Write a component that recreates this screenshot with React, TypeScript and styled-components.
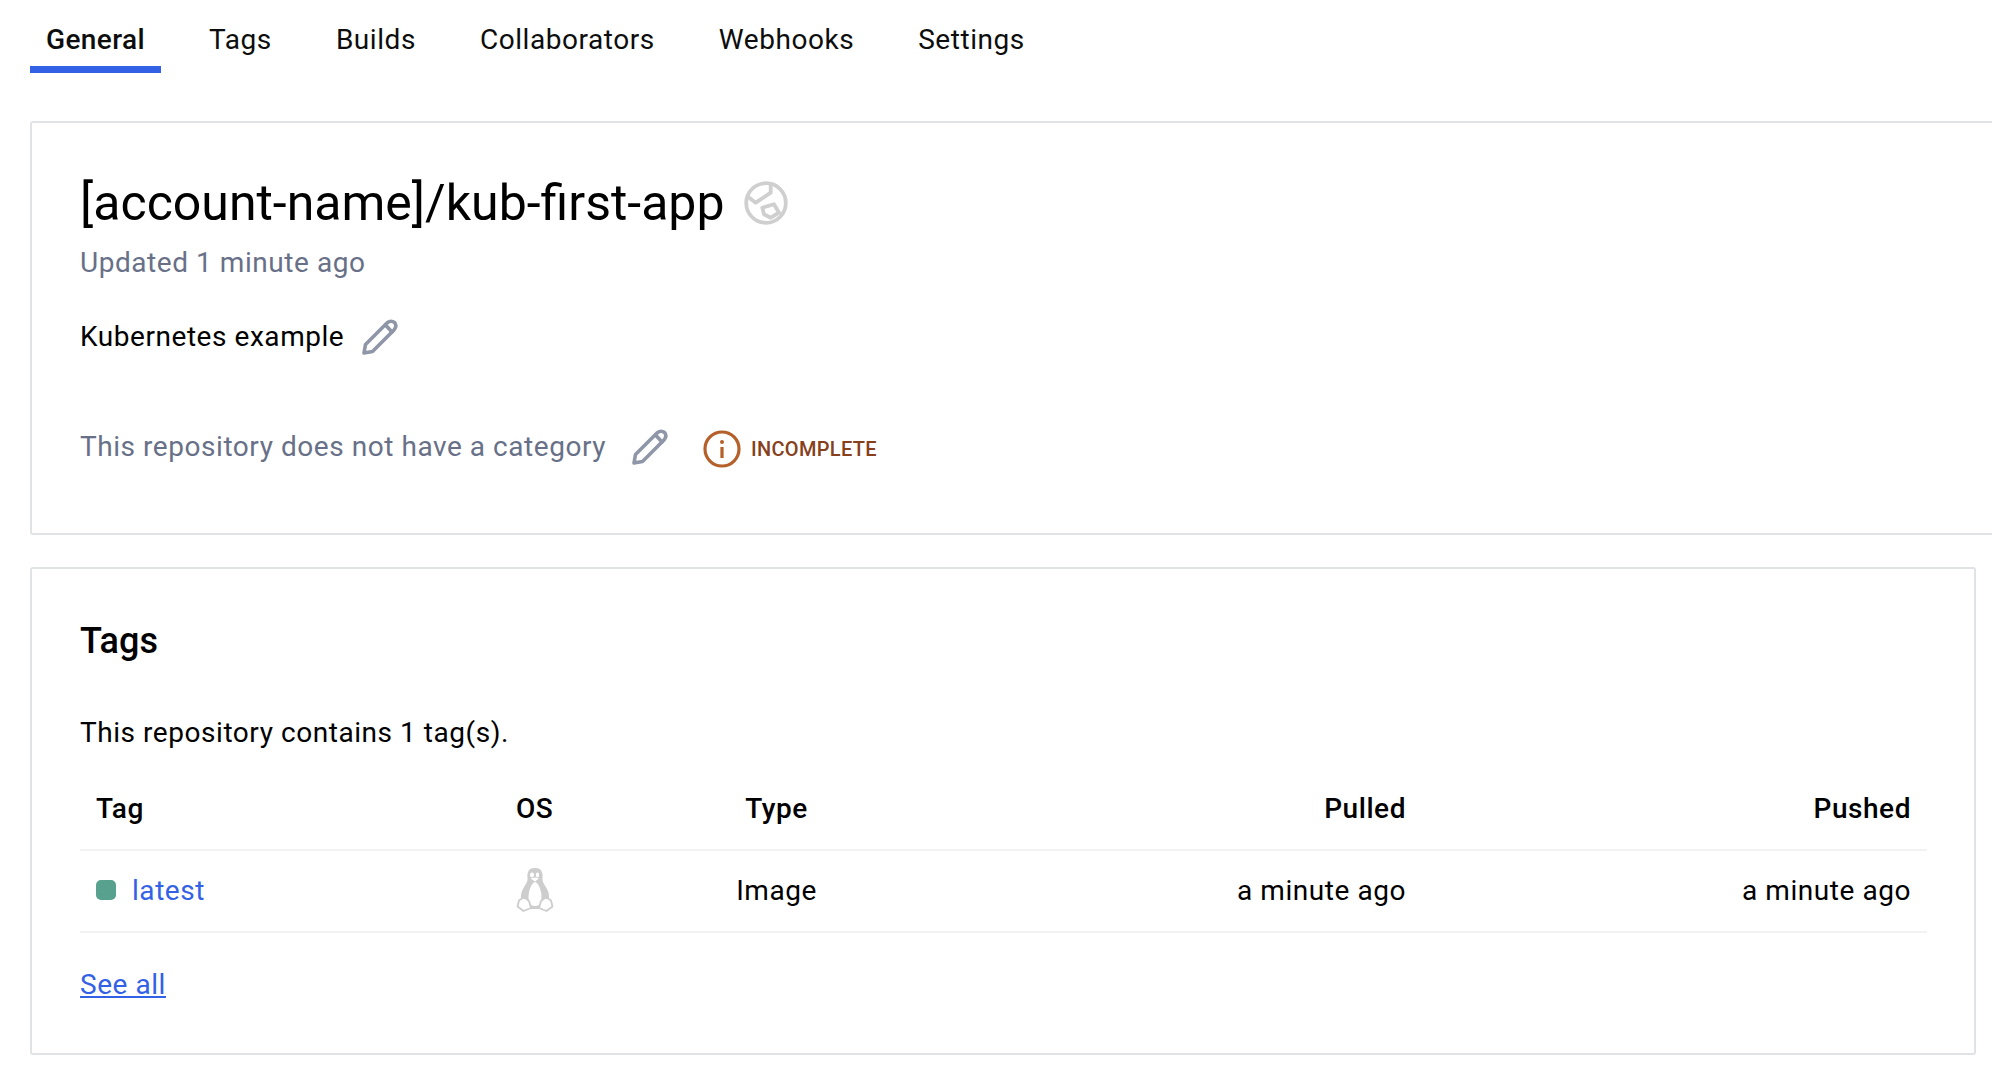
import React from "react";
import styled, { createGlobalStyle } from "styled-components";

const Global = createGlobalStyle`
  html, body { margin: 0; padding: 0; background: #fff; overflow: hidden; }
  body { font-family: Roboto, "Liberation Sans", sans-serif; color: #000; }
  a { color: #3361e6; }
`;

const Page = styled.div`
  width: 1992px;
  height: 1070px;
  overflow: hidden;
  padding: 0 16px 0 30px;
  box-sizing: border-box;
`;

const TabBar = styled.nav`
  display: flex;
  height: 73px;
  margin-bottom: 48px;
`;

const Tab = styled.div<{ $active?: boolean }>`
  padding: 0 16px;
  margin-right: 32px;
  height: 73px;
  line-height: 80px;
  box-sizing: border-box;
  font-size: 28px;
  letter-spacing: ${(p) => (p.$active ? "0.4px" : "0.55px")};
  font-weight: ${(p) => (p.$active ? 500 : 400)};
  color: #0d0d0d;
  border-bottom: 7px solid ${(p) => (p.$active ? "#3361e6" : "transparent")};
  &:last-child { margin-right: 0; }
`;

const Card = styled.section<{ $overflow?: boolean }>`
  box-sizing: border-box;
  border: 2px solid #e1e2e6;
  border-radius: 3px;
  padding: 0 48px;
  background: #fff;
  width: ${(p) => (p.$overflow ? "2000px" : "1946px")};
`;

const HeaderCard = styled(Card)`
  height: 414px;
  margin-bottom: 32px;
  padding-top: 49px;
`;

const TitleRow = styled.div`
  display: flex;
  align-items: center;
  gap: 19px;
  height: 62px;
`;

const Title = styled.h1`
  margin: 0;
  font-size: 50px;
  font-weight: 400;
  line-height: 62px;
`;

const Updated = styled.div`
  font-size: 28px;
  letter-spacing: 0.55px;
  color: #687088;
  line-height: 36px;
  margin-top: 11px;
`;

const Description = styled.div`
  display: flex;
  align-items: center;
  gap: 17px;
  font-size: 28px;
  letter-spacing: 0.55px;
  line-height: 36px;
  margin-top: 37px;
`;

const CategoryRow = styled.div`
  display: flex;
  align-items: center;
  margin-top: 70px;
  font-size: 28px;
  letter-spacing: 0.55px;
  line-height: 36px;
  color: #687088;
`;

const CategoryEdit = styled.span`
  display: flex;
  margin: 0 34px 0 25px;
`;

const Badge = styled.span`
  display: flex;
  align-items: center;
  gap: 10px;
  margin-top: 4px;
  color: #86401c;
  font-size: 20px;
  font-weight: 500;
  letter-spacing: 0.3px;
`;

const TagsCard = styled(Card)`
  height: 488px;
  padding-top: 50px;
`;

const TagsTitle = styled.h2`
  margin: 0;
  font-size: 36px;
  font-weight: 500;
  line-height: 44px;
`;

const Summary = styled.p`
  margin: 52px 0 0;
  font-size: 28px;
  letter-spacing: 0.55px;
  line-height: 36px;
`;

const Table = styled.table`
  width: 1847px;
  border-collapse: collapse;
  table-layout: fixed;
  margin-top: 23px;
`;

const Th = styled.th<{ $align?: string; $w: number }>`
  width: ${(p) => p.$w}px;
  text-align: ${(p) => p.$align || "left"};
  padding: 0 16px 6px;
  height: 76px;
  box-sizing: border-box;
  font-size: 28px;
  letter-spacing: 0.55px;
  font-weight: 500;
  border-bottom: 2px solid #f2f2f4;
`;

const Td = styled.td<{ $align?: string }>`
  text-align: ${(p) => p.$align || "left"};
  padding: 0 16px 2px;
  height: 82px;
  box-sizing: border-box;
  font-size: 28px;
  letter-spacing: 0.55px;
  border-bottom: 2px solid #f2f2f4;
`;

const TagCell = styled.div`
  display: flex;
  align-items: center;
  gap: 16px;
`;

const Dot = styled.span`
  width: 20px;
  height: 20px;
  border-radius: 5px;
  background: #58a18f;
`;

const TagLink = styled.a`
  text-decoration: none;
`;

const OsIcon = styled.div`
  display: flex;
`;

const SeeAll = styled.a`
  display: block;
  width: max-content;
  margin-top: 34px;
  font-size: 28px;
  letter-spacing: 0.55px;
  line-height: 36px;
  text-decoration: underline;
`;

const Pencil = () => (
  <svg width="38" height="38" viewBox="0 0 38 38" fill="none" stroke="#8f96a8" strokeWidth="3.6" strokeLinejoin="round" strokeLinecap="round">
    <path d="M3 35 L4.5 26.5 L26 5 Q30 1.8 33.5 4.5 Q36.5 8 33 12 L11.5 33.5 Z" />
    <path d="M24.5 7 L31 14" />
  </svg>
);

const Globe = () => (
  <svg width="44" height="44" viewBox="0 0 44 44" fill="none" stroke="#cfcfcf" strokeWidth="3.8" strokeLinejoin="round">
    <circle cx="22" cy="22" r="19.8" />
    <path d="M3 15 L11.7 21.7 L26.7 11.7 L26.7 3" />
    <path d="M18.3 26.7 L30 23.3 L35 31.7 L26.7 36.7 L20 33.3 Z" />
  </svg>
);

const Info = () => (
  <svg width="38" height="38" viewBox="0 0 38 38" fill="none">
    <circle cx="19" cy="19" r="17" stroke="#b5602a" strokeWidth="3.2" />
    <rect x="17.4" y="17" width="3.2" height="11" fill="#b5602a" />
    <circle cx="19" cy="12" r="2" fill="#b5602a" />
  </svg>
);

const Tux = () => (
  <svg width="38" height="46" viewBox="0 0 38 46">
    <path fill="#cdcdcd" d="M19 1 C12 1 11 6 11.5 11 C12 15 9 18 7 22 C5 26 4 30 6 35 L12 42 L26 42 L32 35 C34 30 33 26 31 22 C29 18 26 15 26.5 11 C27 6 26 1 19 1 Z" />
    <path fill="#fff" d="M19 15 C16 15.5 12.5 23 12.5 30 C12.5 36 14.5 39 19 39 C23.5 39 25.5 36 25.5 30 C25.5 23 22 15.5 19 15 Z" />
    <ellipse cx="16" cy="8" rx="2" ry="2.4" fill="#fff" />
    <ellipse cx="21.5" cy="8" rx="1.7" ry="2.4" fill="#fff" />
    <path fill="#fff" d="M14.5 11.5 L19 10.5 L23 11.5 L19 14.5 Z" />
    <path fill="#fff" stroke="#cdcdcd" strokeWidth="1.8" strokeLinejoin="round" d="M8 30 L13 34 L15 41 L7.5 44 L1.5 39.5 L3 33.5 Z" />
    <path fill="#fff" stroke="#cdcdcd" strokeWidth="1.8" strokeLinejoin="round" d="M30 30 L25 34 L23 41 L30.5 44 L36.5 39.5 L35 33.5 Z" />
  </svg>
);

const tabs = ["General", "Tags", "Builds", "Collaborators", "Webhooks", "Settings"];

export default function App() {
  return (
    <Page>
      <Global />
      <TabBar>
        {tabs.map((t, i) => (
          <Tab key={t} $active={i === 0}>{t}</Tab>
        ))}
      </TabBar>
      <HeaderCard $overflow>
        <TitleRow>
          <Title>[account-name]/kub-first-app</Title>
          <Globe />
        </TitleRow>
        <Updated>Updated 1 minute ago</Updated>
        <Description>
          Kubernetes example
          <Pencil />
        </Description>
        <CategoryRow>
          This repository does not have a category
          <CategoryEdit><Pencil /></CategoryEdit>
          <Badge><Info />INCOMPLETE</Badge>
        </CategoryRow>
      </HeaderCard>
      <TagsCard>
        <TagsTitle>Tags</TagsTitle>
        <Summary>This repository contains 1 tag(s).</Summary>
        <Table>
          <thead>
            <tr>
              <Th $w={420}>Tag</Th>
              <Th $w={180}>OS</Th>
              <Th $w={193} $align="center">Type</Th>
              <Th $w={549} $align="right">Pulled</Th>
              <Th $w={505} $align="right">Pushed</Th>
            </tr>
          </thead>
          <tbody>
            <tr>
              <Td>
                <TagCell><Dot /><TagLink href="#">latest</TagLink></TagCell>
              </Td>
              <Td><OsIcon><Tux /></OsIcon></Td>
              <Td $align="center">Image</Td>
              <Td $align="right">a minute ago</Td>
              <Td $align="right">a minute ago</Td>
            </tr>
          </tbody>
        </Table>
        <SeeAll href="#">See all</SeeAll>
      </TagsCard>
    </Page>
  );
}
